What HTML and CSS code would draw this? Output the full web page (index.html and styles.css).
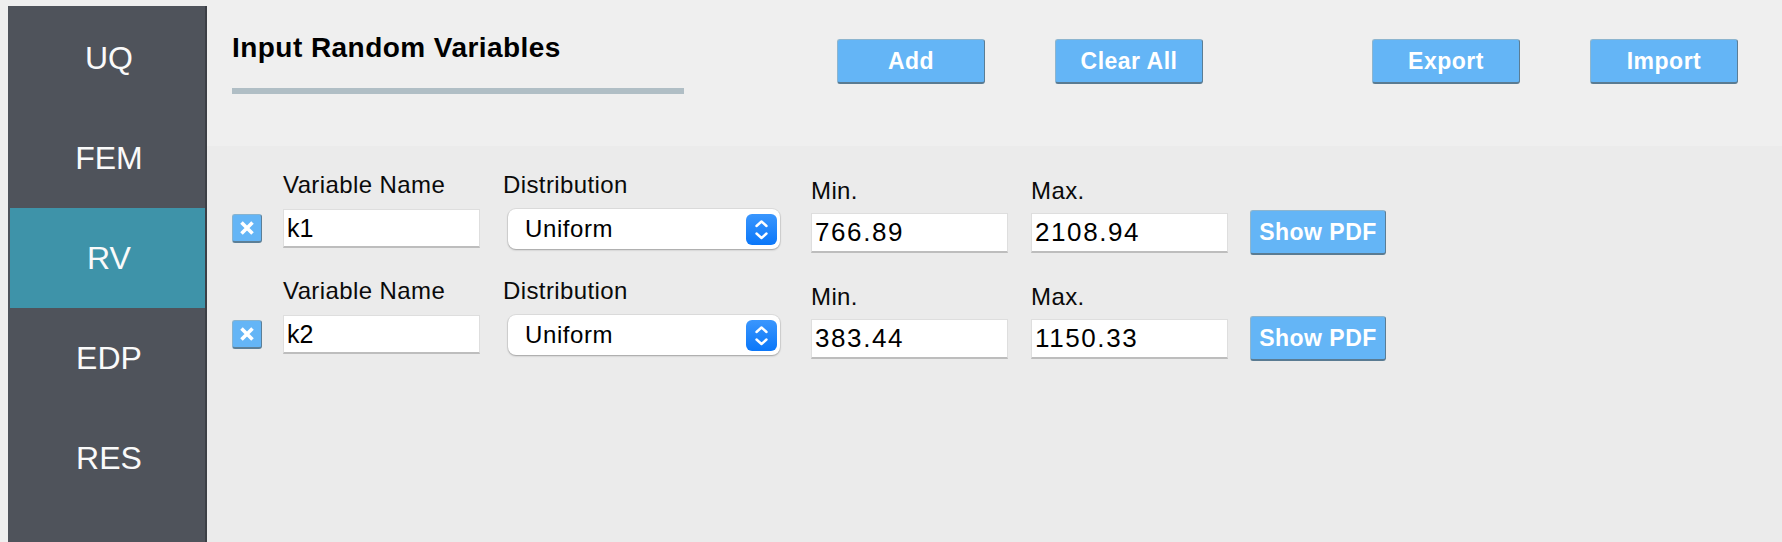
FILE: index.html
```html
<!DOCTYPE html>
<html lang="en">
<head>
<meta charset="utf-8">
<title>Input Random Variables</title>
<link rel="stylesheet" href="styles.css">
</head>
<body>
<nav class="sidebar">
  <div class="nav-item">UQ</div>
  <div class="nav-item">FEM</div>
  <div class="nav-item active">RV</div>
  <div class="nav-item">EDP</div>
  <div class="nav-item">RES</div>
</nav>
<main class="main">
  <header class="header">
    <div class="title-block">
      <h1 class="title">Input Random Variables</h1>
      <div class="title-rule"></div>
    </div>
    <div class="actions">
      <button class="btn">Add</button>
      <button class="btn">Clear All</button>
      <button class="btn btn-export">Export</button>
      <button class="btn">Import</button>
    </div>
  </header>
  <section class="content">
    <div class="rv-row">
      <div class="remove" role="button" aria-label="remove">
        <svg class="remove-icon" width="16" height="16" viewBox="0 0 16 16"><path d="M2.5 2.5 L13.5 13.5 M13.5 2.5 L2.5 13.5" stroke="#fff" stroke-width="3.6" fill="none"/></svg>
      </div>
      <div class="col col-name">
        <div class="label">Variable Name</div>
        <input class="field field-name" type="text" value="k1">
      </div>
      <div class="col col-dist">
        <div class="label">Distribution</div>
        <div class="combo">
          <span class="combo-text">Uniform</span>
          <span class="stepper"><svg width="31" height="31" viewBox="0 0 31 31"><polyline points="10.5,12 15.5,7.5 20.5,12" fill="none" stroke="#fff" stroke-width="2.4" stroke-linecap="round" stroke-linejoin="round"/><polyline points="10.5,19.5 15.5,24 20.5,19.5" fill="none" stroke="#fff" stroke-width="2.4" stroke-linecap="round" stroke-linejoin="round"/></svg></span>
        </div>
      </div>
      <div class="col col-num col-min">
        <div class="label">Min.</div>
        <input class="field field-num" type="text" value="766.89">
      </div>
      <div class="col col-num col-max">
        <div class="label">Max.</div>
        <input class="field field-num" type="text" value="2108.94">
      </div>
      <button class="btn btn-pdf">Show PDF</button>
    </div>
    <div class="rv-row">
      <div class="remove" role="button" aria-label="remove">
        <svg class="remove-icon" width="16" height="16" viewBox="0 0 16 16"><path d="M2.5 2.5 L13.5 13.5 M13.5 2.5 L2.5 13.5" stroke="#fff" stroke-width="3.6" fill="none"/></svg>
      </div>
      <div class="col col-name">
        <div class="label">Variable Name</div>
        <input class="field field-name" type="text" value="k2">
      </div>
      <div class="col col-dist">
        <div class="label">Distribution</div>
        <div class="combo">
          <span class="combo-text">Uniform</span>
          <span class="stepper"><svg width="31" height="31" viewBox="0 0 31 31"><polyline points="10.5,12 15.5,7.5 20.5,12" fill="none" stroke="#fff" stroke-width="2.4" stroke-linecap="round" stroke-linejoin="round"/><polyline points="10.5,19.5 15.5,24 20.5,19.5" fill="none" stroke="#fff" stroke-width="2.4" stroke-linecap="round" stroke-linejoin="round"/></svg></span>
        </div>
      </div>
      <div class="col col-num col-min">
        <div class="label">Min.</div>
        <input class="field field-num" type="text" value="383.44">
      </div>
      <div class="col col-num col-max">
        <div class="label">Max.</div>
        <input class="field field-num" type="text" value="1150.33">
      </div>
      <button class="btn btn-pdf">Show PDF</button>
    </div>
  </section>
</main>
</body>
</html>
```

FILE: styles.css
```css
* { box-sizing: border-box; }

html, body { margin: 0; padding: 0; }

body {
  background: #efefef;
  display: flex;
  height: 542px;
  overflow: hidden;
  font-family: "Liberation Sans", Arial, sans-serif;
  color: #000;
}

/* Sidebar */
.sidebar {
  flex-shrink: 0;
  margin: 6px 0 0 8px;
  width: 199px;
  height: 536px;
  background: #4f535b;
  border-right: 2px solid #3c3f45;
  padding: 2px 0 0 2px;
  display: flex;
  flex-direction: column;
}

.nav-item {
  height: 100px;
  display: flex;
  align-items: center;
  justify-content: center;
  color: #fafafa;
  font-size: 32px;
  padding-left: 3px;
}

.nav-item.active { background: #3e93a9; }

/* Main */
.main {
  flex: 1;
  display: flex;
  flex-direction: column;
}

.header {
  height: 146px;
  flex-shrink: 0;
  display: flex;
  align-items: flex-start;
  padding-left: 25px;
  background: #efefef;
}

.title-block {
  width: 452px;
  padding-top: 34px;
}

.title {
  margin: 0;
  font-size: 28px;
  line-height: 28px;
  font-weight: bold;
  letter-spacing: 0.45px;
}

.title-rule {
  margin-top: 26px;
  height: 6px;
  background: #b0bec5;
}

.actions {
  display: flex;
  gap: 70px;
  padding-top: 39px;
  margin-left: 153px;
}

.btn {
  width: 148px;
  height: 45px;
  padding: 0;
  display: flex;
  align-items: center;
  justify-content: center;
  background: #64b5f6;
  color: #fff;
  font-family: "Liberation Sans", Arial, sans-serif;
  font-weight: bold;
  font-size: 23px;
  letter-spacing: 0.5px;
  border: 1px solid #8db5cf;
  border-right-color: #5b7d94;
  border-bottom: 2px solid #5a7b92;
  border-radius: 3px;
}

.btn-export { margin-left: 99px; }

/* Content */
.content {
  flex: 1;
  background: #ebebeb;
  padding: 27px 0 0 25px;
  display: flex;
  flex-direction: column;
  gap: 24px;
}

.rv-row {
  display: flex;
  align-items: flex-start;
  height: 82px;
}

.remove {
  flex-shrink: 0;
  margin-top: 41px;
  margin-right: 21px;
  width: 30px;
  height: 29px;
  display: flex;
  align-items: center;
  justify-content: center;
  background: #64b5f6;
  border: 1px solid #86b3d0;
  border-right-color: #5c7f97;
  border-bottom: 2px solid #5c7f97;
  border-radius: 3px;
}

.remove-icon { display: block; flex-shrink: 0; }

.col {
  display: flex;
  flex-direction: column;
}

.label {
  height: 24px;
  font-size: 24px;
  line-height: 24px;
  letter-spacing: 0.4px;
  white-space: nowrap;
  color: #0a0a0a;
}

.field {
  width: 197px;
  margin: 0;
  background: #fff;
  border: 1px solid #dedede;
  border-bottom: 2px solid #bdbdbd;
  border-radius: 0;
  font-family: "Liberation Sans", Arial, sans-serif;
  font-size: 25px;
  color: #000;
  padding: 0 0 0 3px;
  outline: none;
}

.col-name { width: 197px; }

.field-name {
  height: 39px;
  margin-top: 12px;
}

.col-dist {
  margin-left: 23px;
}

.combo {
  margin: 12px 0 0 5px;
  width: 272px;
  height: 40px;
  background: #fff;
  border-radius: 8px;
  box-shadow: 0 0 0 1px rgba(0, 0, 0, 0.06), 0 1px 2px rgba(0, 0, 0, 0.28);
  display: flex;
  align-items: center;
  justify-content: space-between;
  padding: 0 3px 0 17px;
}

.combo-text {
  font-size: 24px;
  letter-spacing: 0.6px;
}

.stepper {
  width: 31px;
  height: 31px;
  border-radius: 6px;
  background: linear-gradient(#3a96fd, #0b77f9);
  display: flex;
}

.col-num {
  margin-top: 6px;
}

.col-min { margin-left: 31px; }
.col-max { margin-left: 23px; }

.field-num {
  height: 40px;
  margin-top: 10px;
  font-size: 26px;
  letter-spacing: 1.6px;
}

.btn-pdf {
  width: 136px;
  margin-left: 22px;
  margin-top: 37px;
}
```
